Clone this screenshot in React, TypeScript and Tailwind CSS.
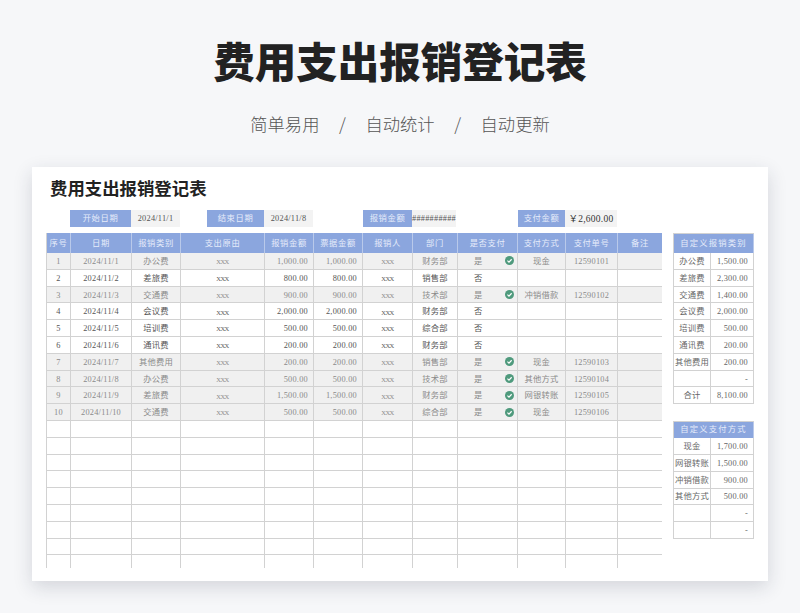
import React from 'react'

const cols = 'grid grid-cols-[24px_61px_49px_84px_49px_49px_50px_45px_60px_48px_52px_45px]'
const serif = "font-['Liberation_Serif','Noto_Sans_CJK_SC',serif]"
const line = 'border-[#d2d2d2]'

const heads = ['序号', '日期', '报销类别', '支出原由', '报销金额', '票据金额', '报销人', '部门', '是否支付', '支付方式', '支付单号', '备注']

interface Row {
  cat: string
  amount: string
  dept: string
  way?: string
  no?: string
}

const rows: Row[] = [
  { cat: '办公费', amount: '1,000.00', dept: '财务部', way: '现金', no: '12590101' },
  { cat: '差旅费', amount: '800.00', dept: '销售部' },
  { cat: '交通费', amount: '900.00', dept: '技术部', way: '冲销借款', no: '12590102' },
  { cat: '会议费', amount: '2,000.00', dept: '财务部' },
  { cat: '培训费', amount: '500.00', dept: '综合部' },
  { cat: '通讯费', amount: '200.00', dept: '财务部' },
  { cat: '其他费用', amount: '200.00', dept: '销售部', way: '现金', no: '12590103' },
  { cat: '办公费', amount: '500.00', dept: '技术部', way: '其他方式', no: '12590104' },
  { cat: '差旅费', amount: '1,500.00', dept: '财务部', way: '网银转账', no: '12590105' },
  { cat: '交通费', amount: '500.00', dept: '综合部', way: '现金', no: '12590106' },
]

const byCategory = [
  ['办公费', '1,500.00'],
  ['差旅费', '2,300.00'],
  ['交通费', '1,400.00'],
  ['会议费', '2,000.00'],
  ['培训费', '500.00'],
  ['通讯费', '200.00'],
  ['其他费用', '200.00'],
  ['', '-'],
  ['合计', '8,100.00'],
]

const byWay = [
  ['现金', '1,700.00'],
  ['网银转账', '1,500.00'],
  ['冲销借款', '900.00'],
  ['其他方式', '500.00'],
  ['', '-'],
  ['', '-'],
]

const Check = () => (
  <svg viewBox="0 0 10 10" className="h-[9px] w-[9px]">
    <circle cx="5" cy="5" r="5" fill="#4f9a7d" />
    <path d="M2.7 5.2 4.4 6.8 7.4 3.6" fill="none" stroke="#fff" strokeWidth="1.3" />
  </svg>
)

const Cell = ({ children, right }: { children?: React.ReactNode; right?: boolean }) => (
  <div className={`flex items-center border-r border-b pt-[2.5px] ${line} ${right ? 'justify-end pr-[5px]' : 'justify-center'}`}>
    {children}
  </div>
)

const Xxx = () => <span className="text-[6.5px] tracking-[-0.5px]">XXX</span>

const Meta = ({ label, value, w1, w2, ml, strong }: { label: string; value: string; w1: string; w2: string; ml: string; strong?: boolean }) => (
  <div className={`flex h-[17px] ${ml}`}>
    <div className={`flex items-center justify-center bg-[#8ba6de] pt-[2px] tracking-[0.6px] text-[#e6ecfa] ${w1}`}>{label}</div>
    <div className={`flex items-center justify-center bg-[#f3f3f3] pt-[2px] ${w2} ${strong ? 'text-[9.5px] text-[#333]' : 'text-[#555]'}`}>{value}</div>
  </div>
)

const Side = ({ title, head, data }: { title: string; head: string; data: string[][] }) => (
  <div className={`w-[81px] border-l border-t ${line}`}>
    <div className={`flex items-center justify-center border-r border-[#b9c9ea] bg-[#8ba6de] pt-[1px] tracking-[1.2px] text-[#e6ecfa] ${head}`}>{title}</div>
    {data.map(([name, value], i) => (
      <div key={i} className="grid h-[16.8px] grid-cols-[37px_43px] text-[#666]">
        <Cell>{name}</Cell>
        <Cell right>{value}</Cell>
      </div>
    ))}
  </div>
)

export default function App() {
  return (
    <div className="flex h-[613px] w-[800px] flex-col items-center overflow-hidden bg-[#f6f7f9] pt-[36px] font-['Noto_Sans_CJK_SC',sans-serif]">
      <h1 className="h-[48px] text-[41.5px] leading-[48px] font-black text-[#222]">费用支出报销登记表</h1>
      <div className="mt-[28px] flex h-[24px] items-center gap-[19px] text-[17.3px] leading-[24px] font-light text-[#555]">
        <span>简单易用</span>
        <span className="w-[8px] text-center">/</span>
        <span>自动统计</span>
        <span className="w-[8px] text-center">/</span>
        <span>自动更新</span>
      </div>

      <div className={`mt-[31px] h-[414px] w-[736px] bg-white px-[14px] pt-[10px] shadow-[0_6px_18px_rgba(30,40,60,0.16)] ${serif} text-[8.3px] tracking-[0.25px]`}>
        <div className="ml-[4px] h-[22px] font-['Noto_Sans_CJK_SC',sans-serif] text-[17.4px] leading-[22px] font-bold tracking-normal text-[#222]">费用支出报销登记表</div>

        <div className="mt-[11px] flex">
          <Meta label="开始日期" value="2024/11/1" w1="w-[61px]" w2="w-[49px]" ml="ml-[24px]" />
          <Meta label="结束日期" value="2024/11/8" w1="w-[57px]" w2="w-[49px]" ml="ml-[27px]" />
          <Meta label="报销金额" value="##########" w1="w-[49px]" w2="w-[44px]" ml="ml-[50px]" />
          <Meta label="支付金额" value="￥2,600.00" w1="w-[47px]" w2="w-[52px]" ml="ml-[62px]" strong />
        </div>

        <div className="mt-[6px] flex items-start gap-[11px]">
          <div className={`h-[335px] w-[616px] overflow-hidden border-l ${line}`}>
            <div className={`${cols} h-[20px] bg-[#8ba6de] text-[#e6ecfa]`}>
              {heads.map(h => (
                <div key={h} className="flex items-center justify-center border-r border-[#b9c9ea] pt-[2px] tracking-[0.6px]">{h}</div>
              ))}
            </div>
            {rows.map((r, i) => {
              const paid = !!r.way
              return (
                <div key={i} className={`${cols} h-[16.8px] ${paid ? 'bg-[#f0f0f0] text-[#8a8a8a]' : 'bg-white text-[#555]'}`}>
                  <Cell>{i + 1}</Cell>
                  <Cell>{`2024/11/${i + 1}`}</Cell>
                  <Cell>{r.cat}</Cell>
                  <Cell><Xxx /></Cell>
                  <Cell right>{r.amount}</Cell>
                  <Cell right>{r.amount}</Cell>
                  <Cell><Xxx /></Cell>
                  <Cell>{r.dept}</Cell>
                  <div className={`flex items-center border-r border-b pr-[3px] pl-[16px] ${line}`}>
                    <span className="pt-[2.5px]">{paid ? '是' : '否'}</span>
                    {paid && <span className="ml-auto flex"><Check /></span>}
                  </div>
                  <Cell>{r.way}</Cell>
                  <Cell>{r.no}</Cell>
                  <Cell />
                </div>
              )
            })}
            {Array.from({ length: 9 }).map((_, i) => (
              <div key={i} className={`${cols} h-[16.8px]`}>
                {heads.map(h => <Cell key={h} />)}
              </div>
            ))}
          </div>

          <div className="flex flex-col gap-[17px]">
            <Side title="自定义报销类别" head="h-[19px]" data={byCategory} />
            <Side title="自定义支付方式" head="h-[16px]" data={byWay} />
          </div>
        </div>
      </div>
    </div>
  )
}
